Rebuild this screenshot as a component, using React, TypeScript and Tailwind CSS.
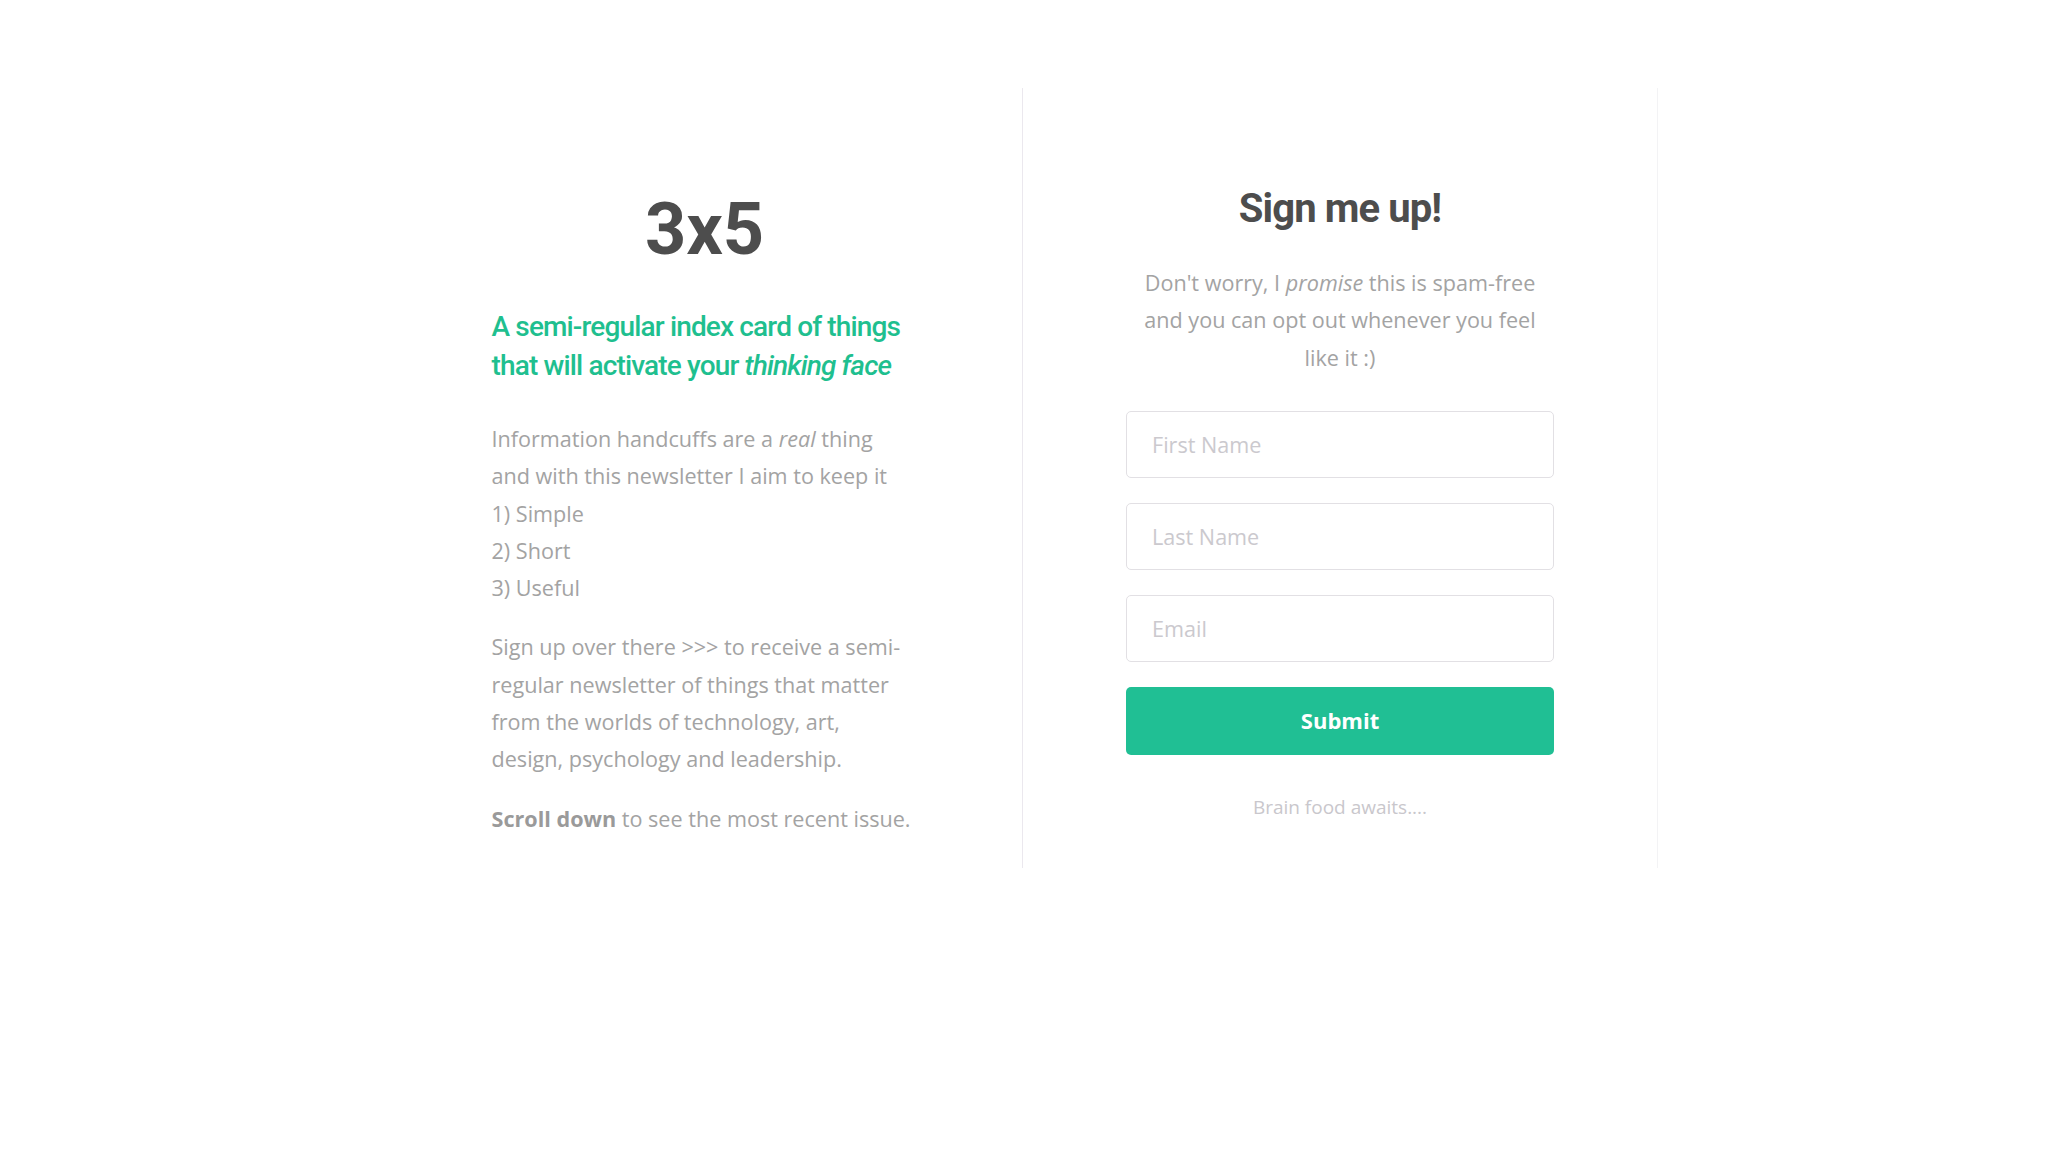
export default function App() {
  return (
    <div className="min-h-screen w-full bg-white pt-[88px]" style={{ fontFamily: '"Open Sans", "Liberation Sans", sans-serif' }}>
      <div className="mx-auto grid w-[1267px] grid-cols-[631px_636px] border-r border-[#f3f3f5]">
        {/* left: about the newsletter */}
        <div className="pt-[103px] pb-[31px] pl-[101px]">
          <div className="w-[422px]">
            <h1
              className="pl-[4px] text-center text-[72px] font-bold leading-[78px] text-[#4d4d4d]"
              style={{ fontFamily: 'Roboto, "Liberation Sans", sans-serif' }}
            >
              3x5
            </h1>
            <h2
              className="mt-[38px] text-[28px] font-medium leading-[39px] tracking-[-0.85px] text-[#1fbf8f]"
              style={{ fontFamily: 'Roboto, "Liberation Sans", sans-serif' }}
            >
              A semi-regular index card of things that will activate your <em>thinking face</em>
            </h2>
            <p className="mt-[35px] text-[21.6px] leading-[37.3px] text-[#a3a3a3]">
              Information handcuffs are a <em>real</em> thing and with this newsletter I aim to keep it
              <br />
              1) Simple
              <br />
              2) Short
              <br />
              3) Useful
            </p>
            <p className="mt-[22px] text-[21.6px] leading-[37.3px] text-[#a3a3a3]">
              Sign up over there &gt;&gt;&gt; to receive a semi-regular newsletter of things that matter
              from the worlds of technology, art, design, psychology and leadership.
            </p>
            <p className="mt-[22px] whitespace-nowrap text-[21.6px] leading-[37.3px] text-[#a3a3a3]">
              <strong className="font-bold text-[#9a9a9a]">Scroll down</strong> to see the most recent issue.
            </p>
          </div>
        </div>

        {/* right: signup form */}
        <div className="border-l border-[#ebe8ee] pt-[97px]">
          <div className="mx-auto w-[428px]">
            <h2
              className="text-center text-[40px] font-bold leading-[48px] tracking-[-0.9px] text-[#4d4d4d]"
              style={{ fontFamily: 'Roboto, "Liberation Sans", sans-serif' }}
            >
              Sign me up!
            </h2>
            <p className="mt-[31px] text-center text-[21.6px] leading-[37.3px] text-[#a3a3a3]">
              Don't worry, I <em>promise</em> this is spam-free and you can opt out whenever you feel like it :)
            </p>
            <form className="mt-[35px] flex flex-col gap-[25px]" onSubmit={(e) => e.preventDefault()}>
              <input
                type="text"
                placeholder="First Name"
                className="h-[67px] w-full rounded-[5px] border border-[#e2e0e4] px-[25px] text-[21.6px] text-[#666] outline-none placeholder:text-[#cbc9ce]"
              />
              <input
                type="text"
                placeholder="Last Name"
                className="h-[67px] w-full rounded-[5px] border border-[#e2e0e4] px-[25px] text-[21.6px] text-[#666] outline-none placeholder:text-[#cbc9ce]"
              />
              <input
                type="email"
                placeholder="Email"
                className="h-[67px] w-full rounded-[5px] border border-[#e2e0e4] px-[25px] text-[21.6px] text-[#666] outline-none placeholder:text-[#cbc9ce]"
              />
              <button
                type="submit"
                className="h-[68px] w-full rounded-[5px] bg-[#20bf94] text-[22px] font-bold text-white"
              >
                Submit
              </button>
            </form>
            <p className="mt-[38px] text-center text-[19px] leading-[28px] text-[#c9c7cc]">Brain food awaits....</p>
          </div>
        </div>
      </div>
    </div>
  );
}
